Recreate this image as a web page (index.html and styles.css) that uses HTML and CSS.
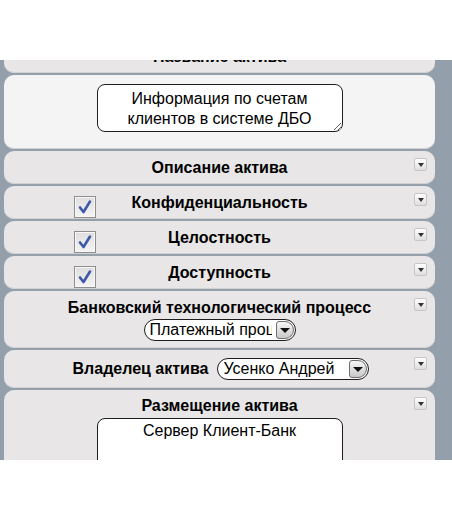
FILE: index.html
```html
<!DOCTYPE html>
<html lang="ru">
<head>
<meta charset="utf-8">
<title>Актив</title>
<link rel="stylesheet" href="styles.css">
</head>
<body>
<div class="viewport">
  <div class="list">
    <div class="card head"><span class="title">Название актива</span></div>
    <div class="card body">
      <textarea class="ta">Информация по счетам клиентов в системе ДБО</textarea>
    </div>
    <div class="card head"><span class="title">Описание актива</span><span class="dd"></span></div>
    <div class="card check">
      <span class="cb"><svg width="22" height="22" viewBox="0 0 22 22"><path d="M6 11.5 L9.5 16 L16 5.5" fill="none" stroke="#3d58a8" stroke-width="2.6" stroke-linecap="round" stroke-linejoin="round"/></svg></span>
      <span class="title">Конфиденциальность</span><span class="dd"></span>
    </div>
    <div class="card check">
      <span class="cb"><svg width="22" height="22" viewBox="0 0 22 22"><path d="M6 11.5 L9.5 16 L16 5.5" fill="none" stroke="#3d58a8" stroke-width="2.6" stroke-linecap="round" stroke-linejoin="round"/></svg></span>
      <span class="title">Целостность</span><span class="dd"></span>
    </div>
    <div class="card check">
      <span class="cb"><svg width="22" height="22" viewBox="0 0 22 22"><path d="M6 11.5 L9.5 16 L16 5.5" fill="none" stroke="#3d58a8" stroke-width="2.6" stroke-linecap="round" stroke-linejoin="round"/></svg></span>
      <span class="title">Доступность</span><span class="dd"></span>
    </div>
    <div class="card stack">
      <span class="title">Банковский технологический процесс</span>
      <div class="sel"><span class="sel-text">Платежный процесс</span><span class="sel-btn"></span></div>
      <span class="dd"></span>
    </div>
    <div class="card inline">
      <span class="title">Владелец актива</span>
      <div class="sel"><span class="sel-text">Усенко Андрей</span><span class="sel-btn"></span></div>
      <span class="dd"></span>
    </div>
    <div class="card place">
      <span class="title">Размещение актива</span>
      <textarea class="ta tall">Сервер Клиент-Банк</textarea>
      <span class="dd"></span>
    </div>
  </div>
</div>
</body>
</html>
```

FILE: styles.css
```css
* { box-sizing: border-box; }
html, body { margin: 0; padding: 0; background: #fff; }
body { font-family: "Liberation Sans", Arial, sans-serif; color: #000; }

.viewport {
  margin-top: 60px;
  height: 400px;
  background: #939fab;
  overflow: hidden;
  padding: 0 17px 0 4px;
}
.list {
  margin-top: -20px;
  display: flex;
  flex-direction: column;
  gap: 2px;
}
.card {
  position: relative;
  background: #e8e6e6;
  border-radius: 10px;
  box-shadow: inset 0 -1px 0 #d3d1d1;
}
.title {
  font-size: 16px;
  font-weight: bold;
  line-height: 18px;
  white-space: nowrap;
}
.head {
  height: 33px;
  display: flex;
  align-items: center;
  justify-content: center;
}
.body {
  background: #f5f4f4;
  height: 74px;
  padding-top: 9px;
  display: flex;
  justify-content: center;
  align-items: flex-start;
}
.ta {
  display: block;
  width: 246px;
  height: 48px;
  border: 1px solid #1e1e1e;
  border-radius: 8px;
  background: #fff;
  color: #000;
  font-family: "Liberation Sans", Arial, sans-serif;
  font-size: 16px;
  line-height: 20px;
  text-align: center;
  padding: 4px 10px;
  overflow: hidden;
  resize: both;
  outline: none;
}
.check {
  height: 33px;
  display: grid;
  grid-template-columns: 70px 22px 1fr 92px;
  align-items: center;
}
.check .cb { grid-column: 2; align-self: end; margin-bottom: 1px; }
.check .title { grid-column: 3; text-align: center; }
.cb {
  display: block;
  width: 22px;
  height: 22px;
  border: 1px solid #8e8e8e;
  background: linear-gradient(#dedede, #f4f4f4);
  box-shadow: inset 0 0 0 1px #f8f8f8;
}
.cb svg { display: block; margin: -1px; }
.dd {
  position: absolute;
  top: 7px;
  right: 8px;
  width: 13px;
  height: 13px;
  border: 1px solid #c6c6c6;
  border-radius: 2px;
  background: linear-gradient(#ffffff, #dedede);
}
.dd::after {
  content: "";
  position: absolute;
  left: 3px;
  top: 4px;
  border-left: 3px solid transparent;
  border-right: 3px solid transparent;
  border-top: 4px solid #333;
}
.stack {
  height: 57px;
  padding-top: 8px;
  display: flex;
  flex-direction: column;
  align-items: center;
  gap: 2px;
}
.inline {
  height: 38px;
  display: flex;
  align-items: center;
  justify-content: center;
  gap: 9px;
  padding-left: 3px;
}
.sel {
  display: flex;
  align-items: center;
  width: 152px;
  height: 22px;
  border: 1px solid #1e1e1e;
  border-radius: 11px;
  background: #fff;
  padding-left: 5px;
  overflow: hidden;
}
.sel-text {
  flex: 1;
  min-width: 0;
  margin-right: 4px;
  font-size: 16px;
  line-height: 20px;
  white-space: nowrap;
  overflow: hidden;
}
.sel-btn {
  position: relative;
  flex: none;
  width: 18px;
  height: 18px;
  margin-right: 1px;
  border: 1px solid #6e6e6e;
  border-radius: 3px 9px 9px 3px;
  background: linear-gradient(#f6f6f6, #c9c9c9);
}
.sel-btn::after {
  content: "";
  position: absolute;
  left: 3px;
  top: 6px;
  border-left: 5px solid transparent;
  border-right: 5px solid transparent;
  border-top: 5px solid #111;
}
.place {
  height: 110px;
  padding-top: 7px;
  display: flex;
  flex-direction: column;
  align-items: center;
  gap: 3px;
}
.ta.tall { height: 60px; padding-top: 2px; }
```
